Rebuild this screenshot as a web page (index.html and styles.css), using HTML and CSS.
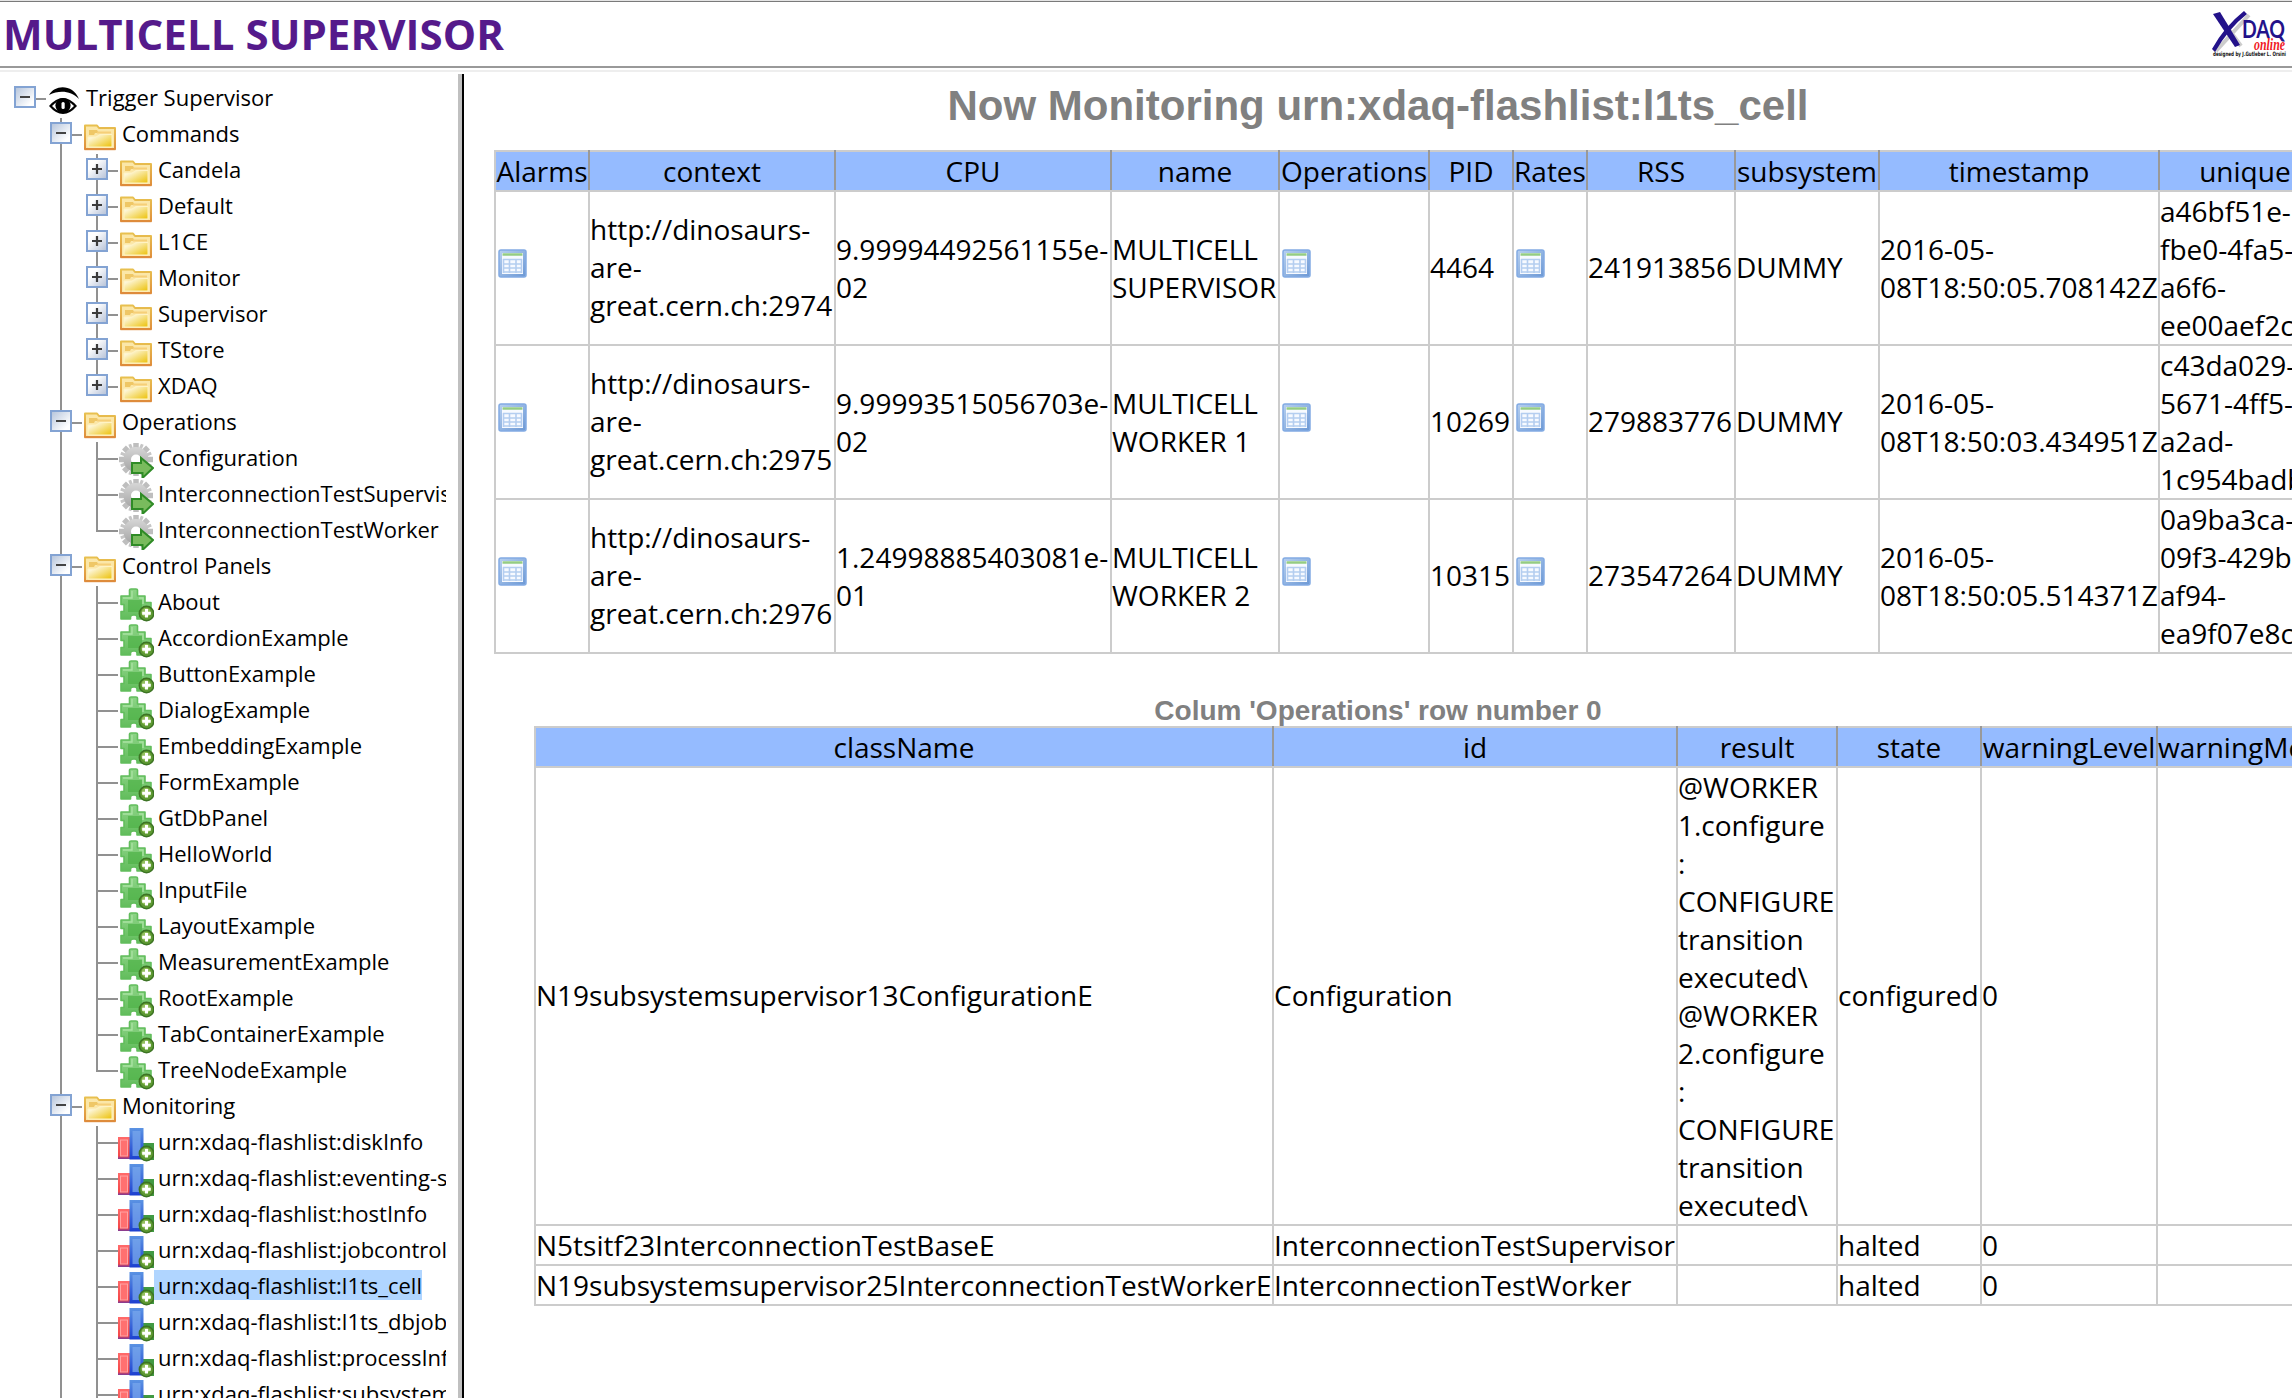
FILE: index.html
```html
<!DOCTYPE html>
<html lang="en">
<head>
<meta charset="utf-8">
<title>MULTICELL SUPERVISOR</title>
<link rel="stylesheet" href="styles.css">
</head>
<body>
<svg class="defs" width="0" height="0">
  <defs>
    <linearGradient id="boxm" x1="0" y1="0" x2="1" y2="1"><stop offset="0" stop-color="#b4c3da"/><stop offset="0.8" stop-color="#fff"/></linearGradient>
    <linearGradient id="boxp" x1="0" y1="0" x2="1" y2="1"><stop offset="0.3" stop-color="#fff"/><stop offset="1" stop-color="#b4c0d6"/></linearGradient>
    <linearGradient id="fold" x1="0" y1="0" x2="1" y2="1"><stop offset="0.2" stop-color="#fdf6d8"/><stop offset="0.9" stop-color="#eec71f"/></linearGradient>
    <linearGradient id="foldline" x1="0" y1="0" x2="0" y2="1"><stop offset="0" stop-color="#e8c04f"/><stop offset="1" stop-color="#df8f3c"/></linearGradient>
    <linearGradient id="grey" x1="0" y1="0" x2="0" y2="1"><stop offset="0" stop-color="#d6d6d6"/><stop offset="1" stop-color="#a4a4a4"/></linearGradient>
    <linearGradient id="red" x1="0" y1="0" x2="0" y2="1"><stop offset="0" stop-color="#ff6a6a"/><stop offset="0.85" stop-color="#f54848"/><stop offset="1" stop-color="#7a3a9a"/></linearGradient>
    <linearGradient id="blue" x1="0" y1="0" x2="0" y2="1"><stop offset="0" stop-color="#5b93e3"/><stop offset="1" stop-color="#1c3fd0"/></linearGradient>
    <linearGradient id="tab" x1="0" y1="0" x2="1" y2="1"><stop offset="0" stop-color="#b7d0f0"/><stop offset="1" stop-color="#6c98d4"/></linearGradient>
    <linearGradient id="puz" x1="0" y1="0" x2="0" y2="1"><stop offset="0" stop-color="#8ed487"/><stop offset="1" stop-color="#62bd5c"/></linearGradient>
  </defs>
  <symbol id="minus" viewBox="0 0 22 22"><rect x="1" y="1" width="20" height="20" fill="url(#boxm)" stroke="#83a3d3" stroke-width="2"/><path d="M6 11h10" stroke="#444" stroke-width="2"/></symbol>
  <symbol id="plus" viewBox="0 0 22 22"><rect x="1" y="1" width="20" height="20" fill="url(#boxp)" stroke="#83a3d3" stroke-width="2"/><path d="M6 11h10M11 6v10" stroke="#3c3c3c" stroke-width="2.2"/></symbol>
  <symbol id="eye" viewBox="0 0 36 36"><path d="M3 13C9 2 27 2 33 17C25 9 14 7.500 3 13Z" fill="#000"/><path d="M3 24Q17 8 31 24Q17 40 3 24Z" fill="#000"/><path d="M6 24Q17 12 28 24Q17 35.500 6 24Z" fill="#fff"/><circle cx="17" cy="23.500" r="7.600" fill="#000"/><rect x="15.500" y="20" width="3.200" height="7" rx="1.500" fill="#fff"/></symbol>
  <symbol id="folder" viewBox="0 0 36 36"><path d="M3 31V7.500H15L17 10H33V31Z" fill="#fbe7a8" stroke="url(#foldline)" stroke-width="2" stroke-linejoin="round"/><path d="M7 12h8l2 3h-4l-1 2H7z" fill="#efc766"/><path d="M15 14.500h14" stroke="#f6cf78" stroke-width="2"/><path d="M6 19H14L18 16.500H30V29H6Z" fill="url(#fold)" stroke="#fff3c4"/><path d="M2.500 31.200H33.500" stroke="#de8b3b" stroke-width="2"/></symbol>
  <symbol id="gear" viewBox="0 0 36 36"><path d="M18 1V34M1 17.500H35M6 5.500L30 29.500M30 5.500L6 29.500" stroke="#bebebe" stroke-width="5.500"/><path d="M11.700 2.300L24.300 32.700M2.800 23.800L33.200 11.200M24.300 2.300L11.700 32.700M2.800 11.200L33.200 23.800" stroke="#c6c6c6" stroke-width="3"/><circle cx="18" cy="17.500" r="12.500" fill="url(#grey)"/><circle cx="18" cy="17.500" r="5" fill="#fff"/><path d="M14 21H23V16L35 26L24.500 36V31H14Z" fill="#79bb5d" stroke="#2f8b26" stroke-width="2"/></symbol>
  <symbol id="puzzle" viewBox="0 0 36 36"><path d="M3 10H11.500V4Q11.500 3 13 3H18Q19.500 3 19.500 4V10H27V16.500H33V24H27V33H19V31Q19 29 16 29Q12.500 29 12.500 31V33H3V25.500H6V18.500H3Z" fill="url(#puz)" stroke="#62bd5c" stroke-width="1.600" stroke-linejoin="round"/><path d="M5 12h9V5M21 12h4v6" stroke="#a9e2a2" stroke-width="1.400" fill="none"/><path d="M10 14h14v12H10z" fill="#4fb247" opacity=".7"/><use href="#add"/></symbol>
  <symbol id="add" viewBox="0 0 36 36"><circle cx="28.500" cy="27.500" r="7.200" fill="#5e9a32" stroke="#3d7424" stroke-width="1.500"/><circle cx="28" cy="26.500" r="4.500" fill="#94bf5f"/><path d="M28.500 23V31.500M24.200 27.300H32.800" stroke="#fff" stroke-width="3"/></symbol>
  <symbol id="bars" viewBox="0 0 36 36"><path d="M24 17H36V34H24z" fill="#419a43"/><rect x="0" y="11" width="12" height="22" fill="url(#red)"/><rect x="2.500" y="14" width="7" height="16" fill="#ff7070" stroke="#ffa3a3"/><rect x="11.500" y="2" width="14" height="31.500" fill="url(#blue)"/><rect x="14.500" y="5" width="8" height="25" fill="#78a7ec" opacity=".75"/><use href="#add"/></symbol>
  <symbol id="grid" viewBox="0 0 30 30"><rect x="1" y="1" width="27" height="27" rx="2" fill="url(#tab)" stroke="#82abe3" stroke-width="1.500"/><rect x="4" y="4" width="21" height="21" fill="#f7faff"/><path d="M4.500 5.500H24.500" stroke="#95cc83" stroke-width="2.500"/><path d="M5 10.500H24M5 15H24M5 19H24M5 23H24M5.500 10V24M11.500 10V24M18 10V24M23.500 10V24" stroke="#b4cef0" stroke-width="1.600"/></symbol>
</svg>

<header class="banner">
  <h1 class="banner-title">MULTICELL SUPERVISOR</h1>
  <svg class="logo" width="82" height="50" viewBox="0 0 82 50">
    <g transform="translate(3 1)">
      <path d="M10 6L32 36M40 5L7 41" fill="none" stroke="#aaa" stroke-width="4" opacity=".6"/>
      <path d="M4 4L11 2L31 35L26 37Z" fill="#23128a"/><path d="M35 1L38 4Q20 18 6 42L3 39Q15 17 35 1Z" fill="#23128a"/>
    </g>
    <text class="logo-name" x="36" y="29" textLength="43" lengthAdjust="spacingAndGlyphs">DAQ</text>
    <text class="logo-online" x="48" y="41" textLength="31" lengthAdjust="spacingAndGlyphs">online</text>
    <text class="logo-credit" x="7" y="47" textLength="73" lengthAdjust="spacingAndGlyphs">designed by J.Gutleber L. Orsini</text>
  </svg>
</header>

<div class="workspace">
  <nav class="tree" id="tree"></nav>
  <main class="monitor">
    <h2 class="monitor-title"><span>Now Monitoring urn:xdaq-flashlist:l1ts_cell</span></h2>
    <table class="flash cells">
      <colgroup><col class="w94"><col class="w247"><col class="w276"><col class="w168"><col class="w150"><col class="w84"><col class="w74"><col class="w148"><col class="w144"><col class="w280"><col class="w196"></colgroup>
      <thead><tr><th>Alarms</th><th>context</th><th>CPU</th><th>name</th><th>Operations</th><th>PID</th><th>Rates</th><th>RSS</th><th>subsystem</th><th>timestamp</th><th>uniqueid</th></tr></thead>
      <tbody>
        <tr><td><svg class="cell-icon"><use href="#grid"/></svg></td><td class="odd">http://dinosaurs-<br>are-<br>great.cern.ch:2974</td><td>9.99994492561155e-<br>02</td><td>MULTICELL<br>SUPERVISOR</td><td><svg class="cell-icon"><use href="#grid"/></svg></td><td class="odd">4464</td><td><svg class="cell-icon"><use href="#grid"/></svg></td><td class="odd">241913856</td><td class="odd">DUMMY</td><td>2016-05-<br>08T18:50:05.708142Z</td><td>a46bf51e-<br>fbe0-4fa5-<br>a6f6-<br>ee00aef2c</td></tr>
        <tr><td><svg class="cell-icon"><use href="#grid"/></svg></td><td class="odd">http://dinosaurs-<br>are-<br>great.cern.ch:2975</td><td>9.99993515056703e-<br>02</td><td>MULTICELL<br>WORKER 1</td><td><svg class="cell-icon"><use href="#grid"/></svg></td><td class="odd">10269</td><td><svg class="cell-icon"><use href="#grid"/></svg></td><td class="odd">279883776</td><td class="odd">DUMMY</td><td>2016-05-<br>08T18:50:03.434951Z</td><td>c43da029-<br>5671-4ff5-<br>a2ad-<br>1c954badb</td></tr>
        <tr><td><svg class="cell-icon"><use href="#grid"/></svg></td><td class="odd">http://dinosaurs-<br>are-<br>great.cern.ch:2976</td><td>1.24998885403081e-<br>01</td><td>MULTICELL<br>WORKER 2</td><td><svg class="cell-icon"><use href="#grid"/></svg></td><td class="odd">10315</td><td><svg class="cell-icon"><use href="#grid"/></svg></td><td class="odd">273547264</td><td class="odd">DUMMY</td><td>2016-05-<br>08T18:50:05.514371Z</td><td>0a9ba3ca-<br>09f3-429b-<br>af94-<br>ea9f07e8c</td></tr>
      </tbody>
    </table>
    <h3 class="detail-title">Colum 'Operations' row number 0</h3>
    <table class="flash detail">
      <colgroup><col class="w738"><col class="w404"><col class="w160"><col class="w144"><col class="w176"><col class="w208"></colgroup>
      <thead><tr><th>className</th><th>id</th><th>result</th><th>state</th><th>warningLevel</th><th>warningMessage</th></tr></thead>
      <tbody>
        <tr><td class="odd">N19subsystemsupervisor13ConfigurationE</td><td class="odd">Configuration</td><td>@WORKER<br>1.configure<br>:<br>CONFIGURE<br>transition<br>executed\<br>@WORKER<br>2.configure<br>:<br>CONFIGURE<br>transition<br>executed\</td><td class="odd">configured</td><td class="odd">0</td><td></td></tr>
        <tr><td>N5tsitf23InterconnectionTestBaseE</td><td>InterconnectionTestSupervisor</td><td></td><td>halted</td><td>0</td><td></td></tr>
        <tr><td>N19subsystemsupervisor25InterconnectionTestWorkerE</td><td>InterconnectionTestWorker</td><td></td><td>halted</td><td>0</td><td></td></tr>
      </tbody>
    </table>
  </main>
</div>
<script src="tree.js"></script>
</body>
</html>
```
FILE: styles.css
```css
* { box-sizing: border-box; }
body { margin: 0; width: 2292px; height: 1398px; overflow: hidden; background: #fff; color: #000; font-family: "Open Sans", sans-serif; display: flex; flex-direction: column; }
.defs { position: absolute; }
.banner { height: 66px; flex: none; border-top: 1px solid #e4e4e4; box-shadow: inset 0 1px 0 #7a7a7a; display: flex; justify-content: space-between; align-items: flex-start; padding: 4px 4px 0 3px; }
.banner-title { margin: 0; font-size: 42px; line-height: 58px; font-weight: 700; letter-spacing: 0.05px; color: #551a8b; white-space: nowrap; }
.logo { margin-top: 4px; }
.logo-name { font: 700 24px Lato, sans-serif; fill: #23128a; }
.logo-online { font: italic 700 16px "Liberation Serif", serif; fill: #f01824; }
.logo-credit { font: 700 6px "DejaVu Sans", sans-serif; fill: #111; }
.workspace { flex: 1; min-height: 0; display: flex; border-top: 2px solid #999; box-shadow: inset 0 2px #fff, inset 0 4px #eee; }
.tree { width: 464px; flex: none; margin-top: 6px; padding: 8px 0 0 10px; border-right: 2px solid #000; box-shadow: inset -4px 0 #c0c0c0; overflow: hidden; }
.row { height: 36px; width: 436px; display: flex; overflow: hidden; }
.slot, .node-icon { width: 36px; height: 36px; flex: none; }
.slot { display: block; }
.label { font-size: 22px; line-height: 31px; height: 30px; padding-left: 4px; white-space: nowrap; }
.label.selected { background: #b0d5ff; }
.monitor { flex: 1; min-width: 0; overflow: hidden; padding-left: 30px; }
.monitor-title { margin: 14px 30px 0 0; height: 68px; text-align: center; font: 700 42px/48px "Liberation Sans", sans-serif; color: #808080; white-space: nowrap; }
.flash { border-collapse: collapse; table-layout: fixed; font-size: 28px; line-height: 38px; }
.flash th, .flash td { padding: 0; border: 2px solid #ccc; white-space: nowrap; }
.flash th { height: 38px; background: #95bbff; font-weight: 400; border-left-color: #999; border-right-color: #999; }
.flash th:first-child { border-left-color: #ccc; }
.flash td { text-align: left; }
.flash td.odd { padding-bottom: 2px; }
.cells { width: 1861px; }
.cells td { height: 154px; }
.detail { width: 1830px; margin-left: 40px; }
.cell-icon { display: block; width: 30px; height: 30px; margin: 0 0 8px 2px; }
.detail-title { margin: 41px 30px 0 0; height: 31px; text-align: center; font: 700 28px/31px "Liberation Sans", sans-serif; color: #808080; }
.w94 { width: 94px; } .w247 { width: 246px; } .w276 { width: 276px; } .w168 { width: 168px; } .w150 { width: 150px; } .w84 { width: 84px; } .w74 { width: 74px; } .w148 { width: 148px; } .w144 { width: 144px; } .w280 { width: 280px; } .w196 { width: 196px; }
.w738 { width: 738px; } .w404 { width: 404px; } .w160 { width: 160px; } .w176 { width: 176px; } .w208 { width: 208px; }
```
FILE: tree.js
```js
const groups = [
  ["Commands", "folder", ["Candela", "Default", "L1CE", "Monitor", "Supervisor", "TStore", "XDAQ"]],
  ["Operations", "gear", ["Configuration", "InterconnectionTestSupervisor", "InterconnectionTestWorker"]],
  ["Control Panels", "puzzle", ["About", "AccordionExample", "ButtonExample", "DialogExample", "EmbeddingExample", "FormExample", "GtDbPanel", "HelloWorld", "InputFile", "LayoutExample", "MeasurementExample", "RootExample", "TabContainerExample", "TreeNodeExample"]],
  ["Monitoring", "bars", ["urn:xdaq-flashlist:diskInfo", "urn:xdaq-flashlist:eventing-statistics", "urn:xdaq-flashlist:hostInfo", "urn:xdaq-flashlist:jobcontrol", "urn:xdaq-flashlist:l1ts_cell", "urn:xdaq-flashlist:l1ts_dbjobs", "urn:xdaq-flashlist:processInfo", "urn:xdaq-flashlist:subsystem", ""]]
];
const selected = "urn:xdaq-flashlist:l1ts_cell";

// One 36px column of the tree: connector lines plus an optional expander box.
function slot(path, box) {
  const line = path ? `<path d="${path}" stroke="#919191" stroke-width="2" fill="none"/>` : "";
  const use = box ? `<use href="#${box}" x="4" y="4" width="22" height="22"/>` : "";
  return `<svg class="slot" viewBox="0 0 36 36">${line}${use}</svg>`;
}
function row(slots, icon, text) {
  const cls = text === selected ? "label selected" : "label";
  return `<div class="row">${slots}<svg class="node-icon"><use href="#${icon}"/></svg><span class="${cls}">${text}</span></div>`;
}
let html = row(slot("M15 17H36", "minus"), "eye", "Trigger Supervisor");
for (const [name, icon, items] of groups) {
  html += row(slot("") + slot("M15 0V36M15 17H36", "minus"), "folder", name);
  items.forEach((item, i) => {
    if (!item) return;
    const tail = i === items.length - 1 ? "M15 0V17H36" : "M15 0V36M15 17H36";
    html += row(slot("") + slot("M15 0V36") + slot(tail, icon === "folder" ? "plus" : ""), icon, item);
  });
}
document.getElementById("tree").innerHTML = html;
```
